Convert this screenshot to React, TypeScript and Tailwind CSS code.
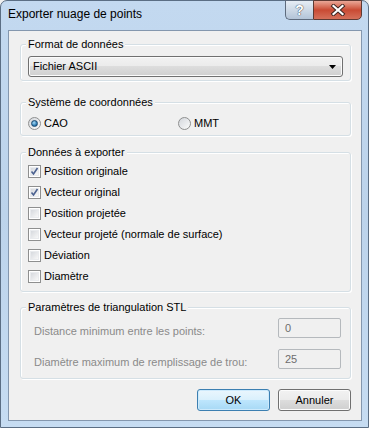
import React from 'react'

const font = { fontFamily: '"Liberation Sans", Arial, sans-serif' }

function Checkbox({ checked, label }: { checked?: boolean; label: string }) {
    return (
        <div className="flex items-center h-[21px]">
            <span className="w-[13px] h-[13px] border border-[#8e8f8f] bg-white p-[1px] flex">
                <span className="flex-1 bg-gradient-to-br from-[#d6d9de] to-[#f8f8f8] border border-[#e9ebee] relative">
                    {checked && (
                        <svg className="absolute -left-[2px] -top-[2px]" width="11" height="11" viewBox="0 0 11 11">
                            <path d="M2.5 5.5 L4.5 8 L8.5 2" fill="none" stroke="#4c6291" strokeWidth="1.6" />
                        </svg>
                    )}
                </span>
            </span>
            <span className="ml-[3px]">{label}</span>
        </div>
    )
}

function Radio({ checked, label }: { checked?: boolean; label: string }) {
    return (
        <div className="flex items-center h-[13px]">
            <span className="w-[13px] h-[13px] rounded-full border border-[#8e8f8f] bg-gradient-to-br from-[#d4d7dc] to-[#fbfbfb] flex items-center justify-center">
                {checked && (
                    <span className="w-[7px] h-[7px] rounded-full bg-[radial-gradient(circle_at_40%_35%,#a6dcf8,#1f6ea8_70%,#164e7e)] border border-[#1c4a70]" />
                )}
            </span>
            <span className="ml-[3px]">{label}</span>
        </div>
    )
}

function Group({ title, className, children }: { title: string; className?: string; children: React.ReactNode }) {
    return (
        <div className={`relative border border-[#d5dfe5] rounded-[3px] shadow-[inset_1px_1px_0_#ffffff,1px_1px_0_#ffffff] ${className ?? ''}`}>
            <span className="absolute left-[5px] -top-[9px] px-[2px] leading-[16px] bg-[#f0f0f0] text-black">{title}</span>
            {children}
        </div>
    )
}

export default function App() {
    return (
        <div className="w-[369px] h-[428px] bg-[#f0f0f0] text-[11px]" style={font}>
            <div className="w-[369px] h-[428px] border border-[#5b6e84] rounded-t-[7px] bg-gradient-to-b from-[#c3d9f0] via-[#bcd3eb] to-[#c6dcf2] flex flex-col">
                {/* Title bar */}
                <div className="h-[29px] flex items-start justify-between">
                    <div className="pl-[7px] pt-[6px] text-[12px] text-black leading-[15px]">Exporter nuage de points</div>
                    <div className="flex -mt-[1px] mr-[6px]">
                        <div className="w-[28px] h-[20px] rounded-bl-[5px] border border-[#5e6b7d] border-r-0 bg-gradient-to-b from-[#e6edf5] via-[#cdd9e6] to-[#b3c4d8] flex items-center justify-center">
                            <span className="text-white font-bold text-[14px] leading-[14px] [text-shadow:0_0_1px_#303a48,0_0_1px_#303a48]">?</span>
                        </div>
                        <div className="w-[49px] h-[20px] rounded-br-[5px] border border-[#5e3a33] bg-gradient-to-b from-[#e9a797] via-[#c94a33] to-[#d5705a] flex items-center justify-center">
                            <svg width="16" height="12" viewBox="0 0 16 12">
                                <path d="M3.5 2 L12.5 10 M12.5 2 L3.5 10" stroke="#3a2420" strokeWidth="4" strokeLinecap="square" />
                                <path d="M3.5 2 L12.5 10 M12.5 2 L3.5 10" stroke="#ffffff" strokeWidth="2.2" strokeLinecap="square" />
                            </svg>
                        </div>
                    </div>
                </div>

                {/* Client area */}
                <div className="flex-1 ml-[7px] mr-[6px] mb-[6px] border border-[#8497ae] bg-[#f0f0f0] flex flex-col pl-[11px] pr-[10px] pt-[13px] pb-[8px] text-black">
                    <Group title="Format de données" className="pl-[7px] pr-[7px] pt-[11px] pb-[3px]">
                        <div className="h-[21px] rounded-[3px] border border-[#707070] bg-[linear-gradient(#f2f2f2,#ebebeb_50%,#dddddd_50%,#cfcfcf)] flex items-center justify-between pl-[4px] pr-[6px] shadow-[inset_0_0_0_1px_#fbfbfb]">
                            <span>Fichier ASCII</span>
                            <svg width="7" height="4" viewBox="0 0 7 4"><path d="M0 0 H7 L3.5 4 Z" fill="#000" /></svg>
                        </div>
                    </Group>

                    <Group title="Système de coordonnées" className="mt-[21px] pl-[7px] pt-[14px] pb-[5px]">
                        <div className="flex">
                            <div className="w-[150px]"><Radio checked label="CAO" /></div>
                            <Radio label="MMT" />
                        </div>
                    </Group>

                    <Group title="Données à exporter" className="mt-[16px] pl-[7px] pt-[8px] pb-[4px]">
                        <Checkbox checked label="Position originale" />
                        <Checkbox checked label="Vecteur original" />
                        <Checkbox label="Position projetée" />
                        <Checkbox label="Vecteur projeté (normale de surface)" />
                        <Checkbox label="Déviation" />
                        <Checkbox label="Diamètre" />
                    </Group>

                    <Group title="Paramètres de triangulation STL" className="mt-[15px] pl-[13px] pr-[9px] pt-[10px] pb-[9px]">
                        <div className="flex flex-col gap-[11px] text-[#8a8a8a]">
                            {[['Distance minimum entre les points:', '0'], ['Diamètre maximum de remplissage de trou:', '25']].map(([l, v]) => (
                                <div key={l} className="flex justify-between items-start h-[20px]">
                                    <span className="pt-[6px] leading-[14px]">{l}</span>
                                    <div className="w-[63px] h-[20px] border border-[#b5b9bd] rounded-[2px] bg-[#f0f0f0] pl-[6px] flex items-center text-[#6d6d6d]">{v}</div>
                                </div>
                            ))}
                        </div>
                    </Group>

                    <div className="mt-[10px] flex justify-end gap-[8px] pr-[-1px]">
                        <button className="w-[73px] h-[22px] rounded-[3px] border border-[#3c7fb1] bg-[linear-gradient(#eaf6fd,#d9f0fc_50%,#bee6fd_50%,#a7d9f5)] shadow-[inset_0_0_0_1px_#cdeafc] text-black text-[11px]" style={font}>OK</button>
                        <button className="w-[73px] h-[22px] rounded-[3px] border border-[#707070] bg-[linear-gradient(#f2f2f2,#ebebeb_50%,#dddddd_50%,#cfcfcf)] shadow-[inset_0_0_0_1px_#fcfcfc] text-black text-[11px]" style={font}>Annuler</button>
                    </div>
                </div>
            </div>
        </div>
    )
}
